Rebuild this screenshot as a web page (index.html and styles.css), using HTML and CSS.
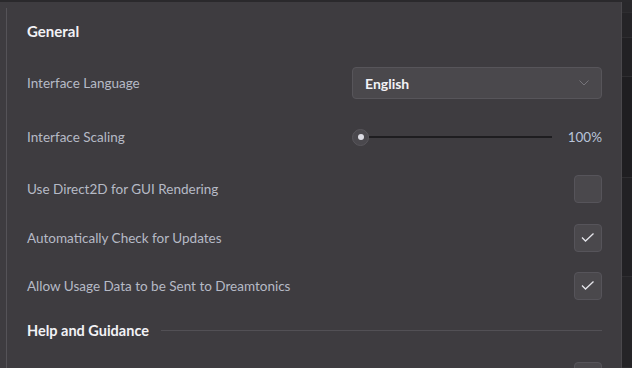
FILE: index.html
```html
<!DOCTYPE html>
<html>
<head>
<meta charset="utf-8">
<link rel="stylesheet" href="styles.css">
</head>
<body>
<div class="app">
  <div class="panel">
    <div class="content">
      <div class="title">General</div>
      <div class="row">
        <div class="label">Interface Language</div>
        <div class="select">
          <span class="select-text">English</span>
          <svg class="chev" width="10" height="6" viewBox="0 0 10 6"><path d="M0.5 0.5 L5 5 L9.5 0.5" fill="none" stroke="#76747a" stroke-width="1"/></svg>
        </div>
      </div>
      <div class="row">
        <div class="label">Interface Scaling</div>
        <div class="slider">
          <div class="knob"><div class="dot"></div></div>
          <div class="track"></div>
          <div class="pct">100%</div>
        </div>
      </div>
      <div class="row">
        <div class="label">Use Direct2D for GUI Rendering</div>
        <div class="check"></div>
      </div>
      <div class="row">
        <div class="label">Automatically Check for Updates</div>
        <div class="check"><svg width="28" height="28" viewBox="0 0 28 28"><path d="M8 13.5 L11.5 17 L19.5 9.5" fill="none" stroke="#e4e4ea" stroke-width="1.3"/></svg></div>
      </div>
      <div class="row">
        <div class="label">Allow Usage Data to be Sent to Dreamtonics</div>
        <div class="check"><svg width="28" height="28" viewBox="0 0 28 28"><path d="M8 13.5 L11.5 17 L19.5 9.5" fill="none" stroke="#e4e4ea" stroke-width="1.3"/></svg></div>
      </div>
      <div class="section">
        <div class="section-title">Help and Guidance</div>
        <div class="rule"></div>
      </div>
      <div class="row row-last">
        <div class="label"></div>
        <div class="check"></div>
      </div>
    </div>
  </div>
  <div class="side">
    <div class="band b1"></div>
    <div class="band b2"></div>
    <div class="band b3"></div>
    <div class="band b4"></div>
    <div class="band b5"></div>
    <div class="band b6"></div>
  </div>
</div>
</body>
</html>
```

FILE: styles.css
```css
html, body {
  margin: 0;
  padding: 0;
  background: #3e3c40;
  height: 100%;
  overflow: hidden;
}
.app {
  display: flex;
  height: 368px;
  border-top: 2px solid #2a292c;
  box-sizing: border-box;
  font-family: "Lato", "Noto Sans", sans-serif;
  font-size: 13.5px;
  overflow: hidden;
}
.panel {
  width: 622px;
  flex: none;
  padding-left: 6px;
  padding-top: 6px;
  box-sizing: border-box;
  border-right: 1px solid #4a484c;
  overflow: hidden;
}
.content {
  border-left: 1px solid #555358;
  height: 100%;
  padding: 0 19px 0 20px;
  display: grid;
  grid-template-rows: 46px 58px 50px 54px 44px 52px 36px 56px;
}
.title {
  display: flex;
  align-items: center;
  color: #f2f2f6;
  font-weight: 700;
  font-size: 15px;
}
.row {
  display: grid;
  grid-template-columns: 1fr 250px;
  align-items: center;
}
.label {
  color: #b6bac6;
}
.select {
  height: 32px;
  box-sizing: border-box;
  background: #4a484c;
  border: 1px solid #57555a;
  border-radius: 4px;
  display: flex;
  align-items: center;
  justify-content: space-between;
  padding: 0 12px 0 12px;
}
.select-text {
  color: #f2f2f6;
  font-weight: 700;
  font-size: 14px;
}
.slider {
  display: flex;
  align-items: center;
  height: 20px;
}
.knob {
  width: 17px;
  height: 17px;
  border-radius: 50%;
  box-sizing: border-box;
  background: #4a484d;
  border: 1px solid #58565b;
  display: flex;
  align-items: center;
  justify-content: center;
  flex: none;
}
.dot {
  width: 6px;
  height: 6px;
  border-radius: 50%;
  background: #dcdce4;
}
.track {
  height: 2px;
  background: #1e1d20;
  width: 183px;
  flex: none;
}
.pct {
  flex: 1;
  text-align: right;
  color: #b9c4da;
}
.check {
  justify-self: end;
  width: 28px;
  height: 28px;
  box-sizing: border-box;
  background: #4a484c;
  border: 1px solid #56545a;
  border-radius: 4px;
  position: relative;
}
.check svg {
  position: absolute;
  left: -1px;
  top: -1px;
}
.row-last {
  align-items: start;
  padding-top: 14px;
}
.section {
  display: flex;
  align-items: center;
  gap: 12px;
}
.section-title {
  color: #f2f2f6;
  font-weight: 700;
  font-size: 14.5px;
}
.rule {
  flex: 1;
  height: 1px;
  background: #525055;
}
.side {
  flex: 1;
  background: #222124;
  display: flex;
  flex-direction: column;
}
.band { border-bottom: 1px solid #2e2d30; }
.b1 { height: 10px; background: #29282b; }
.b2 { height: 24px; background: #252427; }
.b3 { height: 38px; background: #222124; }
.b4 { height: 100px; background: #1f1e21; }
.b5 { height: 98px; background: #222124; }
.b6 { flex: 1; background: #252427; }
```
